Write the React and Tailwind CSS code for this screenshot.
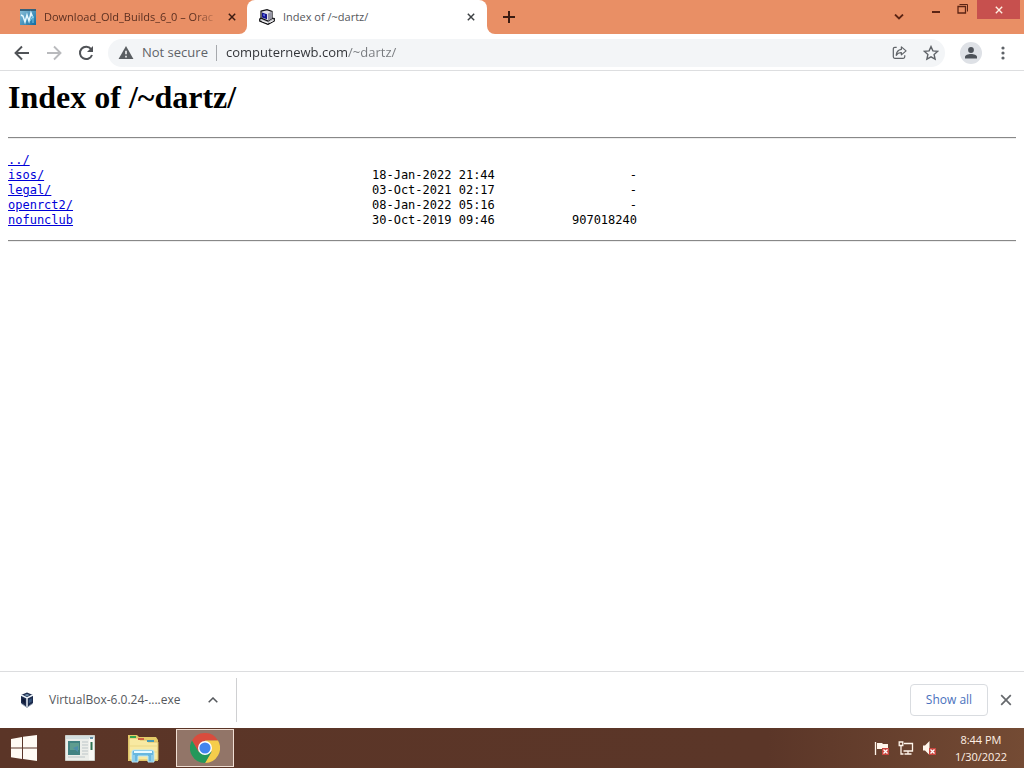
import React from "react";

const files = [
  { name: "../", date: "", size: "" },
  { name: "isos/", date: "18-Jan-2022 21:44", size: "-" },
  { name: "legal/", date: "03-Oct-2021 02:17", size: "-" },
  { name: "openrct2/", date: "08-Jan-2022 05:16", size: "-" },
  { name: "nofunclub", date: "30-Oct-2019 09:46", size: "907018240" },
];

function Cross({ className, width = 1.8 }) {
  return (
    <svg viewBox="0 0 10 10" className={className} fill="none" stroke="currentColor" strokeWidth={width} aria-hidden="true">
      <path d="M1 1l8 8M9 1L1 9" />
    </svg>
  );
}

function WikiIcon() {
  return (
    <svg viewBox="0 0 16 16" className="size-4 shrink-0" aria-hidden="true">
      <defs>
        <linearGradient id="wiki" x1="0" y1="0" x2="1" y2="1">
          <stop offset="0" stopColor="#8fc4dc" />
          <stop offset="1" stopColor="#0f6aa0" />
        </linearGradient>
      </defs>
      <rect width="16" height="16" fill="url(#wiki)" />
      <path d="M0 1h16" stroke="#35617c" strokeWidth="2" />
      <path d="M1 6l2 1 2 6 2-7 2 6 2-8 2 5" fill="none" stroke="#e4f8ff" strokeWidth="1.5" />
      <path d="M10 12l3-5v7" fill="none" stroke="#76c8e8" />
    </svg>
  );
}

function ComputerIcon() {
  return (
    <svg viewBox="0 0 16 16" className="size-4 shrink-0" aria-hidden="true">
      <path d="M.7 10l3-2 11.600 1.500v2.500L9 15.400 .7 12z" fill="#c6c6cb" stroke="#101014" strokeWidth="1.200" />
      <path d="M2 2.200L8 .7l5 1.800v7L9 12 2 9z" fill="#e2e2e6" stroke="#101014" strokeWidth="1.200" />
      <path d="M9 4.500l4-2v7L9 12z" fill="#9696a4" />
      <path d="M3 3.600l5 1.700v5L3 8.400z" fill="#14148c" />
      <path d="M4.200 5l1.800.6v2L4.200 7z" fill="#5c6cf0" />
      <path d="M3 11.800l6 2.200M10.500 13.500l4-2" stroke="#fff" strokeWidth=".9" />
    </svg>
  );
}

function BoxIcon() {
  return (
    <svg viewBox="0 0 14 16" className="h-4 w-[14px] shrink-0" aria-hidden="true">
      <path d="M1 3l6-2.5L13 3v8l-6 4.5L1 11z" fill="#1d2b4c" />
      <path d="M1 3l6 3 6-3M7 6v9" fill="none" stroke="#edf4fa" strokeWidth="1.5" />
      <path d="M4.3 3.1L7 2l2.7 1.1L7 4.4z" fill="#7291ad" />
      <path d="M2.3 6.2l2.8 1.5v3.6L2.3 9.5z" fill="#0d1835" />
      <path d="M8.8 7.7l3-1.5v3.3l-3 2z" fill="#34547c" />
      <path d="M1 11.4l6 4 6-4" fill="none" stroke="#8394aa" strokeWidth=".8" />
    </svg>
  );
}

function TabStrip() {
  return (
    <header className="flex h-[34px] shrink-0 bg-white text-[11px] text-[#5b2f20]">
      <div className="flex w-[247px] shrink-0 items-center rounded-br-lg bg-[#e98f65] pr-[7px] pl-5">
        <button className="flex min-w-0 flex-1 items-center gap-2">
          <WikiIcon />
          <span className="flex-1 mask-r-from-85% text-left whitespace-nowrap">Download_Old_Builds_6_0 – Orac</span>
        </button>
        <button aria-label="Close Download_Old_Builds tab" className="ml-1 flex size-4 items-center justify-center text-[#3b1c12]">
          <Cross className="size-2" />
        </button>
      </div>
      <div className="flex w-60 shrink-0 bg-linear-to-b from-[#e98f65] from-50% to-white to-50%">
        <div className="flex flex-1 items-center rounded-t-lg bg-white pr-2 pl-3">
          <button className="flex flex-1 items-center gap-2 text-[#55575b]">
            <ComputerIcon />
            <span>Index of /~dartz/</span>
          </button>
          <button aria-label="Close Index tab" className="flex size-4 items-center justify-center text-[#3c4043]">
            <Cross className="size-2" />
          </button>
        </div>
      </div>
      <div className="flex min-w-0 flex-1 items-center rounded-bl-lg bg-[#e98f65] pl-3">
        <button aria-label="New tab" className="flex size-5 items-center justify-center text-[#3b1c12]">
          <svg viewBox="0 0 12 12" className="size-3" stroke="currentColor" strokeWidth="2" aria-hidden="true">
            <path d="M6 0v12M0 6h12" />
          </svg>
        </button>
        <div className="ml-auto flex self-stretch text-[#5b2414]">
          <button aria-label="Search tabs" className="mr-[10px] flex w-7 items-center justify-center">
            <svg viewBox="0 0 10 6" className="h-[6px] w-[10px]" fill="none" stroke="currentColor" strokeWidth="1.800" aria-hidden="true">
              <path d="M1 .5l4 4 4-4" />
            </svg>
          </button>
          <button aria-label="Minimize" className="flex h-6 w-[26px] items-center justify-center">
            <span className="h-[2px] w-2 bg-current" />
          </button>
          <button aria-label="Restore" className="flex h-[18px] w-[26px] items-center justify-center">
            <svg viewBox="0 0 11 10" className="h-[10px] w-[11px]" fill="none" stroke="currentColor" aria-hidden="true">
              <path d="M2.500 .5h8v7" />
              <path d="M1 2.500h7.500v6.500H1z" strokeWidth="1.300" />
            </svg>
          </button>
          <button aria-label="Close window" className="mr-1 ml-[2px] flex h-[19px] w-[43px] items-center justify-center bg-[#c7504e] text-[#fff0e4]">
            <Cross className="size-2" width={1.7} />
          </button>
        </div>
      </div>
    </header>
  );
}

function Toolbar() {
  return (
    <nav className="flex h-[37px] shrink-0 items-center border-b border-[#dddee0] bg-white pt-px pr-2 pl-[10px] text-[13px] text-[#5f6368]">
      <button aria-label="Back" className="flex size-6 items-center justify-center text-[#505357]">
        <svg viewBox="0 0 16 16" className="size-4" fill="none" stroke="currentColor" strokeWidth="1.9" aria-hidden="true"><path d="M15 8H2M8 1.5L1.500 8 8 14.500" /></svg>
      </button>
      <button aria-label="Forward" className="ml-2 flex size-6 items-center justify-center text-[#b9babd]">
        <svg viewBox="0 0 16 16" className="size-4" fill="none" stroke="currentColor" strokeWidth="1.9" aria-hidden="true"><path d="M1 8h13M8 1.500L14.500 8 8 14.500" /></svg>
      </button>
      <button aria-label="Reload" className="ml-2 flex size-6 items-center justify-center text-[#505357]">
        <svg viewBox="0 0 16 16" className="size-4" aria-hidden="true">
          <path d="M13.1 4.1A6.2 6.2 0 1 0 14 10" fill="none" stroke="currentColor" strokeWidth="2" />
          <path d="M15 1v6H9z" fill="currentColor" />
        </svg>
      </button>
      <div className="ml-[10px] flex h-7 min-w-0 flex-1 items-center rounded-full bg-[#f3f5f7] pl-[10px]">
        <svg viewBox="0 0 16 14" className="h-[13px] w-4 shrink-0" aria-hidden="true">
          <path d="M8 0l8 14H0z" fill="#5a5e62" />
          <path d="M8 5v4M8 10.500v2" stroke="#fff" strokeWidth="1.600" />
        </svg>
        <label htmlFor="address" className="ml-2 w-[74px] whitespace-nowrap">Not secure</label>
        <span className="h-4 w-px bg-[#a6a9ad]" />
        <input
          id="address"
          defaultValue="computernewb.com/~dartz/"
          className="ml-[9px] min-w-0 flex-1 bg-linear-to-r from-[#303236] from-[122px] to-[#777a7e] to-[122px] bg-clip-text text-transparent caret-black outline-none"
        />
        <button aria-label="Share" className="flex size-7 items-center justify-center">
          <svg viewBox="0 0 16 16" className="size-[15px]" fill="none" stroke="currentColor" strokeWidth="1.3" strokeLinejoin="round" aria-hidden="true">
            <path d="M5 2.500H3a1.600 1.600 0 0 0-1.600 1.600v8.500A1.600 1.600 0 0 0 3 14.200h9a1.600 1.600 0 0 0 1.600-1.600V11" />
            <path d="M10 2l5 4.300-5 4.200V8.200C7.500 8 5.800 9 4.500 11 4.700 7.500 7 5 10 4.600z" />
          </svg>
        </button>
        <button aria-label="Bookmark this page" className="ml-1 flex size-7 items-center justify-center">
          <svg viewBox="0 0 16 16" className="size-4" fill="none" stroke="currentColor" strokeWidth="1.4" aria-hidden="true">
            <path d="M8 1.600l1.900 4.300 4.700.5-3.500 3.100 1 4.700L8 11.800l-4.100 2.400 1-4.700L1.400 6.400l4.700-.5z" />
          </svg>
        </button>
      </div>
      <button aria-label="Profile" className="ml-[15px] flex size-[22px] items-center justify-center rounded-full bg-[#dee1e6] text-[#4d5259]">
        <svg viewBox="0 0 12 12" className="size-3" fill="currentColor" aria-hidden="true">
          <circle cx="6" cy="3" r="2.900" />
          <path d="M0 11.500V10c0-2 3-3 6-3s6 1 6 3v1.500z" />
        </svg>
      </button>
      <button aria-label="Browser menu" className="ml-2 flex w-[26px] items-center justify-center">
        <svg viewBox="0 0 4 14" className="h-[14px] w-1" fill="currentColor" aria-hidden="true"><circle cx="2" cy="2" r="1.600" /><circle cx="2" cy="7" r="1.600" /><circle cx="2" cy="12" r="1.600" /></svg>
      </button>
    </nav>
  );
}

function Listing() {
  return (
    <main className="min-h-0 flex-1 overflow-auto bg-white px-2 pt-2 text-black">
      <h1 className="font-['Liberation_Serif',serif] text-[32px] leading-9 font-bold">Index of /~dartz/</h1>
      <hr className="mt-[22px] border-t border-b border-t-[#888] border-b-[#eee]" />
      <table className="mt-[14px] font-['DejaVu_Sans_Mono',monospace] text-[12px] leading-[15px]">
        <tbody>
          {files.map((file) => (
            <tr key={file.name}>
              <td className="w-[364px] p-0"><a href="#" className="text-[#0000d8] underline">{file.name}</a></td>
              <td className="w-[165px] p-0">{file.date}</td>
              <td className="w-[100px] p-0 text-right">{file.size}</td>
            </tr>
          ))}
        </tbody>
      </table>
      <hr className="mt-3 border-t border-b border-t-[#888] border-b-[#eee]" />
    </main>
  );
}

function DownloadBar() {
  return (
    <section aria-label="Downloads" className="flex h-[57px] shrink-0 items-center border-t border-[#dcdddf] bg-white pr-[10px] text-[12px] text-[#55585c]">
      <div className="flex h-11 w-[237px] items-center border-r border-[#cfd0d2] pr-[15px] pl-5">
        <button className="flex flex-1 items-center gap-[15px]">
          <BoxIcon />
          <span>VirtualBox-6.0.24-....exe</span>
        </button>
        <button aria-label="Download options" className="flex size-4 items-center justify-center">
          <svg viewBox="0 0 10 6" className="h-[6px] w-[10px]" fill="none" stroke="currentColor" strokeWidth="1.500" aria-hidden="true"><path d="M.7 5.300L5 1l4.300 4.300" /></svg>
        </button>
      </div>
      <button className="ml-auto h-8 w-[78px] rounded border border-[#d9dce0] font-medium text-[#4971bd]">Show all</button>
      <button aria-label="Close downloads" className="ml-[10px] flex size-4 items-center justify-center text-[#65686c]">
        <Cross className="size-3" width={1.4} />
      </button>
    </section>
  );
}

function Taskbar() {
  return (
    <footer className="flex h-10 shrink-0 items-center bg-linear-to-r from-[#5b3527] via-[#5b3628] via-75% to-[#744b34] pr-[17px] text-[#fff0e5]">
      <button aria-label="Start" className="flex h-10 w-12 items-center justify-center">
        <svg viewBox="0 0 26 26" className="size-[26px]" fill="#fffaf3" aria-hidden="true"><path d="M0 4l11-2v10.500H0zM12 1.800L26 0v12.500H12zM0 13.500h11V24L0 22.200zM12 13.500h14V26l-14-2z" /></svg>
      </button>
      <button aria-label="Server Manager" className="flex h-10 w-16 items-center justify-center">
        <svg viewBox="0 0 30 26" className="h-[26px] w-[30px]" aria-hidden="true">
          <path d="M.5.500h29v25H.5z" fill="#eceeea" stroke="#cccfc9" />
          <path d="M1 1h28v3H1z" fill="#d4dfdf" />
          <path d="M3 6h12v14H3z" fill="#428382" />
          <path d="M5 8h9v7H5z" fill="#5f9d8f" /><path d="M8 13l5-2v6z" fill="#4e8eaa" />
          <path d="M17 7h6M17 10h6M17 13h6M17 16h6M17 19h6M3 22h17" stroke="#bdc6c8" />
          <path d="M24 3h5v22h-5z" fill="#f8f8f4" /><path d="M25.500 7h2v8h-2z" fill="#2e7352" /><path d="M25 3h3" stroke="#6691a8" strokeWidth="2" />
        </svg>
      </button>
      <button aria-label="File Explorer" className="flex h-10 w-[62px] items-center justify-center">
        <svg viewBox="0 0 32 30" className="h-[30px] w-8" aria-hidden="true">
          <path d="M1 4V2h9l2 2h17l2 3v21H1z" fill="#e4cb68" />
          <path d="M2 5h9l2 2h7l1 2h10v18H2z" fill="#f8e9a2" stroke="#d9bd66" />
          <path d="M3 3h6v2H3z" fill="#35a54f" /><path d="M11 5h6v2h-6z" fill="#cf6043" /><path d="M20 7h7v2h-7z" fill="#459bb6" />
          <path d="M3 13h27M3 19h27" stroke="#ead887" />
          <path d="M5 29V19q0-2 2-2h18q2 0 2 2v10h-6v-6H11v6z" fill="#68b7df" stroke="#bfeaf7" />
          <path d="M7 19h18" stroke="#e8faff" strokeWidth="2" /><path d="M7 22v6M25 22v6" stroke="#b5e4f5" />
        </svg>
      </button>
      <button aria-label="Google Chrome" className="ml-[2px] flex h-[38px] w-[58px] items-center justify-center border border-[#f0ded3] bg-[#927568]">
        <svg viewBox="0 0 30 30" className="size-[30px]" aria-hidden="true">
          <path d="M2 7.500A15 15 0 0 1 28 7.500H15L8.500 18.700z" fill="#d94c3d" />
          <path d="M28 7.500A15 15 0 0 1 15 30l6.500-11.300L15 7.500z" fill="#f5cd4b" />
          <path d="M2 7.500A15 15 0 0 0 15 30l6.500-11.300h-13z" fill="#24985a" />
          <circle cx="15" cy="15" r="7" fill="#fff" /><circle cx="15" cy="15" r="5.600" fill="#4385ee" />
        </svg>
      </button>
      <div className="ml-auto flex items-center gap-2">
        <button aria-label="Action Center">
          <svg viewBox="0 0 16 16" className="size-4" aria-hidden="true">
            <path d="M1.500 2v13" stroke="#fff5ea" strokeWidth="1.300" /><path d="M3 3h5l1 1h5v6H9L8 9H3z" fill="#fff5ea" />
            <path d="M8 8h7v7H8z" fill="#c9453d" /><path d="M9.500 9.500l4 4M13.500 9.500l-4 4" stroke="#fff" strokeWidth="1.300" />
          </svg>
        </button>
        <button aria-label="Network">
          <svg viewBox="0 0 16 16" className="size-4" fill="none" stroke="#fff5ea" strokeWidth="1.300" aria-hidden="true">
            <path d="M6 3.500h8.500v7.500H5.500M10 11v3M6.500 14h7M3 5.500V14h2.500" /><path d="M1.200 2h3.600v3.500H1.200z" />
          </svg>
        </button>
        <button aria-label="Volume muted">
          <svg viewBox="0 0 16 16" className="size-4" aria-hidden="true">
            <path d="M1 5.500h2L7.500 1v14L3 10.500H1z" fill="#fff5ea" />
            <path d="M7 8h7v7H7z" fill="#c9453d" /><path d="M8.500 9.500l4 4M12.500 9.500l-4 4" stroke="#fff" strokeWidth="1.300" />
          </svg>
        </button>
      </div>
      <button className="ml-[17px] flex flex-col items-center text-[11px] leading-[17px]"><time>8:44 PM</time><time>1/30/2022</time></button>
    </footer>
  );
}

export default function App() {
  return (
    <div className="flex h-screen flex-col bg-white font-['Open_Sans',sans-serif]">
      <TabStrip />
      <Toolbar />
      <Listing />
      <DownloadBar />
      <Taskbar />
    </div>
  );
}
